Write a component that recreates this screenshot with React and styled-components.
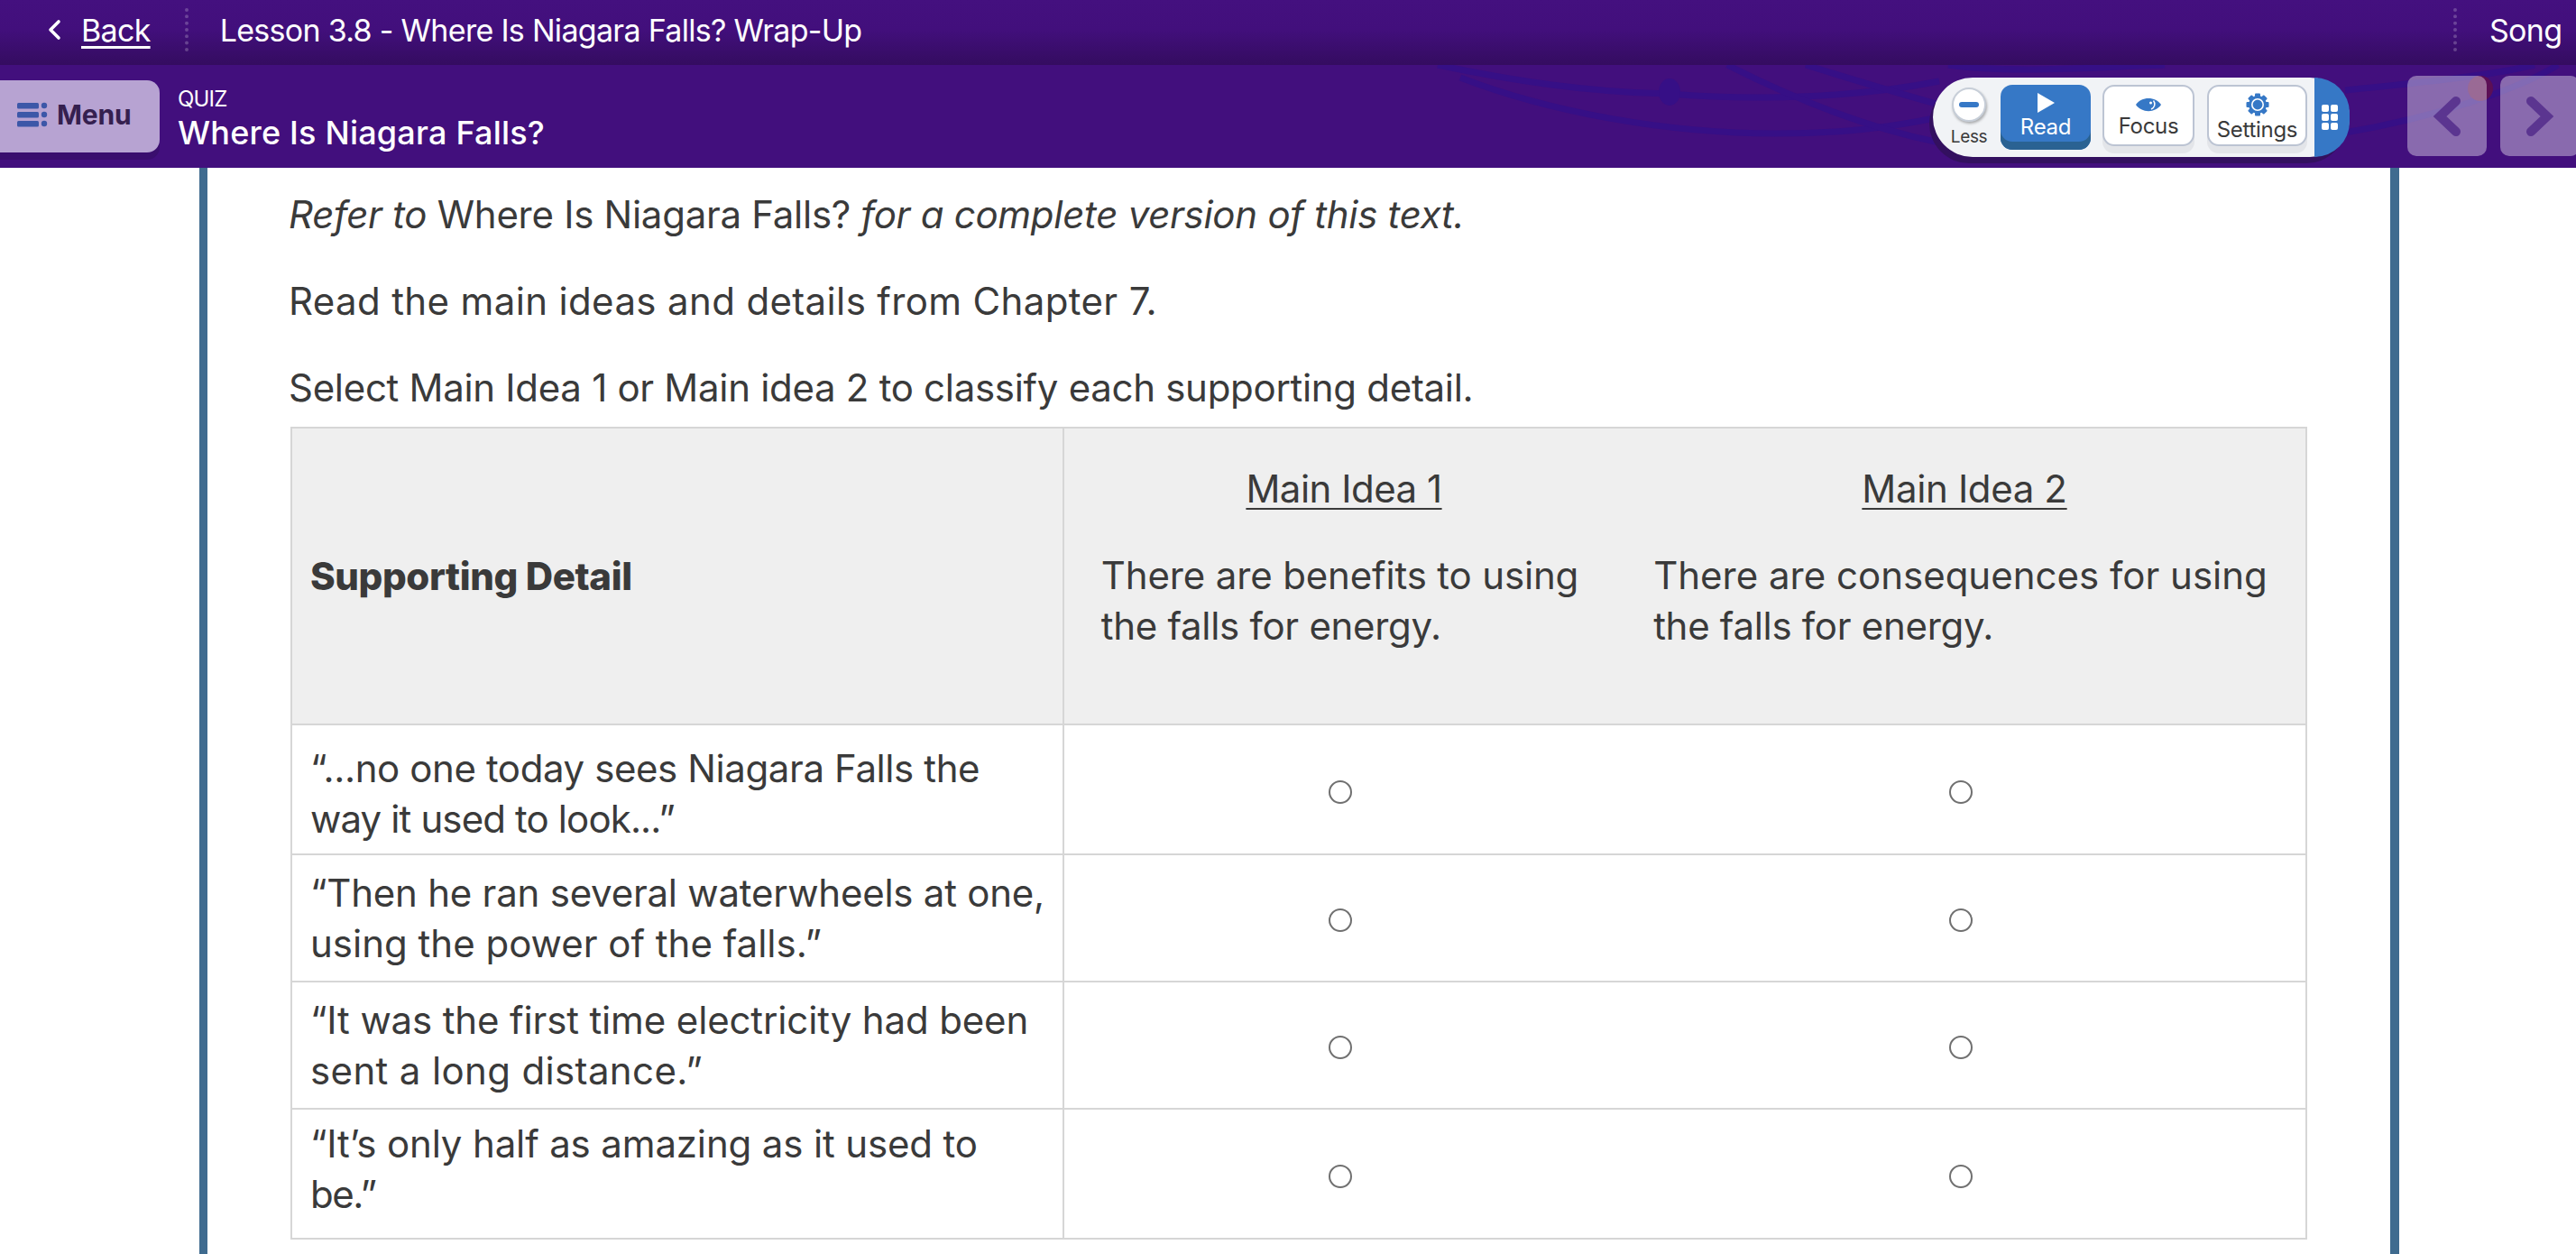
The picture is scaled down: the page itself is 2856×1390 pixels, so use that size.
import React from "react";
import styled, { createGlobalStyle } from "styled-components";

const Global = createGlobalStyle`
  html, body { margin: 0; padding: 0; background: #fff; }
  body { font-family: "Inter", "Noto Sans", sans-serif; color: #3a3a3a; }
  * { box-sizing: border-box; }
`;
const FONT = `"Inter", "Noto Sans", sans-serif`;

const Page = styled.div`
  width: 2856px; height: 1390px; overflow: hidden; display: flex; flex-direction: column; background: #fff;
`;
const TopBar = styled.div`
  height: 72px; flex: none; display: flex; align-items: center; padding: 0 0 6px 52px;
  color: #fff; background: linear-gradient(#44107f 0%, #420f7c 45%, #340c60 100%);
  font-family: ${FONT}; font-size: 34px; letter-spacing: -0.7px; overflow: hidden;
`;
const BackLink = styled.a`
  color: #fff; text-decoration: underline; text-underline-offset: 5px; text-decoration-thickness: 3px; margin-left: 22px;
`;
const Dots = styled.div`
  flex: none; height: 48px; border-left: 4px dotted rgba(255,255,255,.22); margin: ${p => p.$m};
`;
const LessonTitle = styled.div`flex: 1; white-space: nowrap;`;
const Song = styled.div`flex: none; width: 96px; white-space: nowrap;`;

const SubBar = styled.div`
  position: relative; height: 114px; flex: none; display: flex; align-items: flex-start; background: #420f7d; overflow: hidden;
`;
const Waves = styled.svg`position: absolute; left: 0; top: 0; pointer-events: none;`;
const MenuButton = styled.div`
  position: relative; flex: none; width: 177px; height: 80px; margin-top: 17px; display: flex; align-items: center; gap: 10px; padding: 0 0 5px 19px;
  background: #b7a3d2; border-radius: 0 14px 14px 0; box-shadow: 0 8px 0 #3a0e6e;
  font-family: ${FONT}; font-weight: 700; font-size: 30px; color: #35204f; letter-spacing: -0.2px;
`;
const Titles = styled.div`
  position: relative; flex: 1; padding: 23px 0 0 20px; color: #fff; font-family: ${FONT};
`;
const Kicker = styled.div`font-size: 24px; line-height: 30px; letter-spacing: -0.8px;`;
const QuizName = styled.div`font-size: 36px; line-height: 44px; font-weight: 500; letter-spacing: 0.2px;`;

const ToolPill = styled.div`
  position: relative; flex: none; width: 462px; height: 88px; margin-top: 14px; display: flex; align-items: flex-start;
  background: #f1f3f6; border-radius: 44px; box-shadow: -4px 7px 0 #33105f; font-family: ${FONT};
`;
const LessGroup = styled.div`
  flex: none; width: 38px; margin: 0 16px 0 21px; padding-top: 11px; display: flex; flex-direction: column; align-items: center;
  font-size: 19px; line-height: 24px; color: #3a3a3a; letter-spacing: -0.4px;
`;
const LessCircle = styled.div`
  flex: none; width: 38px; height: 38px; border-radius: 50%; background: #fff; border: 2px solid #c7ced8; box-shadow: 1px 2px 3px rgba(0,0,0,.3);
  display: flex; align-items: center; justify-content: center; margin-bottom: 5px;
  &::before { content: ""; width: 22px; height: 6px; border-radius: 3px; background: #3678c6; }
`;
const ReadButton = styled.div`
  flex: none; width: 100px; height: 72px; margin: 8px 13px 0 0; border-radius: 13px; background: #3678c6; box-shadow: inset 0 -9px 0 #2a6292;
  color: #fff; font-size: 24px; letter-spacing: -0.3px; display: flex; flex-direction: column; align-items: center; padding-top: 8px; line-height: 30px;
`;
const ToolButton = styled.div`
  flex: none; width: ${p => p.$w}px; height: 68px; margin: 8px ${p => p.$mr}px 0 0; border-radius: 13px; background: #fff;
  border: 2px solid #bcc4d3; box-shadow: 0 8px 0 #e3e5e9; color: #3a3a3a; font-size: 24px; letter-spacing: -0.3px;
  display: flex; flex-direction: column; align-items: center; padding-top: ${p => p.$pt}px; line-height: 30px; gap: ${p => p.$gap}px;
`;
const GripCap = styled.div`
  position: absolute; right: 0; top: 0; width: 39px; height: 88px; background: #3678c6; border-radius: 0 44px 44px 0;
  display: grid; grid-template-columns: 8px 8px; grid-auto-rows: 8px; gap: 2px; align-content: center; justify-content: start; padding-left: 8px;
`;
const GripDot = styled.span`background: #fff; border-radius: 2px;`;
const NavGroup = styled.div`
  position: relative; flex: none; width: 187px; margin: 12px 0 0 64px; display: flex; gap: 15px; overflow: hidden;
`;
const NavButton = styled.div`
  flex: none; width: 88px; height: 89px; border-radius: 10px; background: rgba(255,255,255,.38); display: flex; align-items: center; justify-content: center;
`;

const Panel = styled.main`
  flex: 1; margin-left: 221px; width: 2439px; border-left: 9px solid #3f6b8f; border-right: 10px solid #3f6b8f;
  padding: 24px 0 0 90px; font-family: ${FONT}; font-size: 42px; line-height: 56px; color: #3a3a3a;
`;
const Para = styled.p`
  margin: 0 0 ${p => p.$mb || 40}px; letter-spacing: ${p => p.$ls}px; white-space: nowrap;
  em { font-style: italic; }
`;
const Grid = styled.table`
  border-collapse: collapse; table-layout: fixed; width: 2234px; margin-left: 2px;
`;
const HeadCell = styled.th`
  background: #efefef; border: 2px solid #d6d6d6; border-left-width: ${p => p.$nol ? 0 : 2}px; border-right-width: ${p => p.$nor ? 0 : 2}px;
  height: 329px; padding: 0; font-weight: 400; vertical-align: middle;
`;
const DetailHead = styled.div`
  text-align: left; padding-left: 20px; font-weight: 800; letter-spacing: -0.4px;
`;
const IdeaHead = styled.div`display: flex; flex-direction: column; align-items: center; gap: 40px; padding-bottom: 42px;`;
const IdeaLabel = styled.u`
  text-underline-offset: 6px; text-decoration-thickness: 2px; margin-left: 9px; letter-spacing: ${p => p.$ls}px;
`;
const IdeaText = styled.div`text-align: left; white-space: nowrap;`;
const Line = styled.span`display: block; letter-spacing: ${p => p.$ls}px;`;
const Row = styled.tr`height: ${p => p.$h}px;`;
const DetailCell = styled.td`
  border: 2px solid #d6d6d6; padding: ${p => p.$pt}px 8px ${p => p.$pb}px 20px; vertical-align: middle; white-space: nowrap;
`;
const ChoiceCell = styled.td`
  border-top: 2px solid #d6d6d6; border-bottom: 2px solid #d6d6d6; border-right: ${p => p.$last ? "2px solid #d6d6d6" : "0"};
  text-align: center; vertical-align: middle; padding: 5px 0 0; line-height: 0;
`;
const Radio = styled.input`
  appearance: none; width: 26px; height: 26px; margin: 0; border-radius: 50%; border: 2px solid #707070; background: #fff;
`;

const MenuIcon = () => (
  <svg width="34" height="28" viewBox="0 0 34 28" fill="#3c57a8">
    <rect x="0" y="1" width="24" height="6.5" rx="1.5" /><rect x="0" y="11" width="24" height="6.5" rx="1.5" /><rect x="0" y="21" width="24" height="6.5" rx="1.5" />
    <circle cx="30" cy="4" r="3.2" /><circle cx="30" cy="14" r="3.2" /><circle cx="30" cy="24" r="3.2" />
  </svg>
);
const Chevron = ({ dir }) => (
  <svg width="34" height="46" viewBox="0 0 34 46" style={{ transform: dir === "r" ? "scaleX(-1)" : "none" }}>
    <path d="M27 6 L9 23 L27 40" fill="none" stroke="#5b3590" strokeWidth="10" strokeLinecap="round" strokeLinejoin="miter" />
  </svg>
);
const Eye = () => (
  <svg width="28" height="16" viewBox="0 0 28 16">
    <path d="M0 8 C6 -1.5 22 -1.5 28 8 C22 17.5 6 17.5 0 8 Z" fill="#3678c6" />
    <path d="M19.5 3.5 a6 6 0 0 1 -2.5 9.5" fill="none" stroke="#fff" strokeWidth="1.5" />
    <circle cx="16.5" cy="6" r="1.5" fill="#fff" />
  </svg>
);
const Gear = () => (
  <svg width="26" height="26" viewBox="0 0 26 26">
    <g fill="#3678c6">
      {[0, 45, 90, 135, 180, 225, 270, 315].map(a => (
        <rect key={a} x="10" y="0.5" width="6" height="6" rx="1" transform={`rotate(${a} 13 13)`} />
      ))}
      <circle cx="13" cy="13" r="10" />
    </g>
    <circle cx="13" cy="13" r="6.2" fill="none" stroke="#fff" strokeWidth="1.6" />
  </svg>
);
const Play = () => (
  <svg width="22" height="24" viewBox="0 0 22 24"><path d="M2 1 L21 12 L2 23 Z" fill="#fff" /></svg>
);
const BackChevron = () => (
  <svg width="16" height="24" viewBox="0 0 16 24"><path d="M13 3 L4 12 L13 21" fill="none" stroke="#fff" strokeWidth="3.6" strokeLinecap="round" strokeLinejoin="round" /></svg>
);

const rows = [
  { h: 144, pt: 10, pb: 0, lines: [["“...no one today sees Niagara Falls the", -0.4], ["way it used to look...”", -0.87]] },
  { h: 141, pt: 0, pb: 0, lines: [["“Then he ran several waterwheels at one,", -0.23], ["using the power of the falls.”", 0]] },
  { h: 141, pt: 0, pb: 0, lines: [["“It was the first time electricity had been", -0.14], ["sent a long distance.”", 0.36]] },
  { h: 144, pt: 0, pb: 10, lines: [["“It’s only half as amazing as it used to", -0.15], ["be.”", -1.5]] },
];

export default function App() {
  return (
    <Page>
      <Global />
      <TopBar>
        <BackChevron />
        <BackLink>Back</BackLink>
        <Dots $m="0 35px 0 38px" />
        <LessonTitle>Lesson 3.8 - Where Is Niagara Falls? Wrap-Up</LessonTitle>
        <Dots $m="0 36px 0 0" />
        <Song>Song</Song>
      </TopBar>
      <SubBar>
        <Waves width="2856" height="114" viewBox="0 72 2856 114" fill="none" stroke="#360f86" strokeWidth="7">
          <path d="M1594 72 C1680 90 1760 102 1850 104 C1950 112 2060 108 2150 90" />
          <path d="M1619 86 C1720 125 1850 148 1970 148 C2050 148 2100 140 2150 130" />
          <path d="M1915 72 C1980 105 2060 140 2150 158" />
          <path d="M2002 72 C2060 90 2100 102 2150 116" />
          <path d="M2160 72 C2230 82 2330 74 2400 72" />
          <path d="M2600 100 C2680 92 2760 84 2810 72" />
          <path d="M2600 147 C2700 130 2790 100 2836 72" />
          <ellipse cx="1851" cy="102" rx="12" ry="15" fill="#360f86" stroke="none" />
          <circle cx="2750" cy="98" r="14" fill="#5c0f55" stroke="none" />
        </Waves>
        <MenuButton><MenuIcon />Menu</MenuButton>
        <Titles>
          <Kicker>QUIZ</Kicker>
          <QuizName>Where Is Niagara Falls?</QuizName>
        </Titles>
        <ToolPill>
          <LessGroup><LessCircle />Less</LessGroup>
          <ReadButton><Play />Read</ReadButton>
          <ToolButton $w={102} $mr={14} $pt={12} $gap={1}><Eye />Focus</ToolButton>
          <ToolButton $w={111} $mr={0} $pt={7} $gap={-2}><Gear />Settings</ToolButton>
          <GripCap>{Array.from({ length: 6 }).map((_, i) => <GripDot key={i} />)}</GripCap>
        </ToolPill>
        <NavGroup>
          <NavButton><Chevron dir="l" /></NavButton>
          <NavButton><Chevron dir="r" /></NavButton>
        </NavGroup>
      </SubBar>
      <Panel>
        <Para $ls={-0.28}><em>Refer to</em> Where Is Niagara Falls? <em>for a complete version of this text.</em></Para>
        <Para $ls={0.36}>Read the main ideas and details from Chapter 7.</Para>
        <Para $ls={-0.3} $mb={15}>Select Main Idea 1 or Main idea 2 to classify each supporting detail.</Para>
        <Grid>
          <colgroup>
            <col style={{ width: 856 }} /><col style={{ width: 612 }} /><col style={{ width: 766 }} />
          </colgroup>
          <thead>
            <tr>
              <HeadCell><DetailHead>Supporting Detail</DetailHead></HeadCell>
              <HeadCell $nor>
                <IdeaHead>
                  <IdeaLabel $ls={-0.5}>Main Idea 1</IdeaLabel>
                  <IdeaText><Line $ls={-0.15}>There are benefits to using</Line><Line $ls={-0.3}>the falls for energy.</Line></IdeaText>
                </IdeaHead>
              </HeadCell>
              <HeadCell $nol>
                <IdeaHead>
                  <IdeaLabel $ls={-0.36}>Main Idea 2</IdeaLabel>
                  <IdeaText><Line $ls={0}>There are consequences for using</Line><Line $ls={-0.3}>the falls for energy.</Line></IdeaText>
                </IdeaHead>
              </HeadCell>
            </tr>
          </thead>
          <tbody>
            {rows.map((r, i) => (
              <Row key={i} $h={r.h}>
                <DetailCell $pt={r.pt} $pb={r.pb}>
                  {r.lines.map(([t, ls]) => <Line key={t} $ls={ls}>{t}</Line>)}
                </DetailCell>
                <ChoiceCell><Radio type="radio" name={`r${i}`} /></ChoiceCell>
                <ChoiceCell $last><Radio type="radio" name={`r${i}`} /></ChoiceCell>
              </Row>
            ))}
          </tbody>
        </Grid>
      </Panel>
    </Page>
  );
}
